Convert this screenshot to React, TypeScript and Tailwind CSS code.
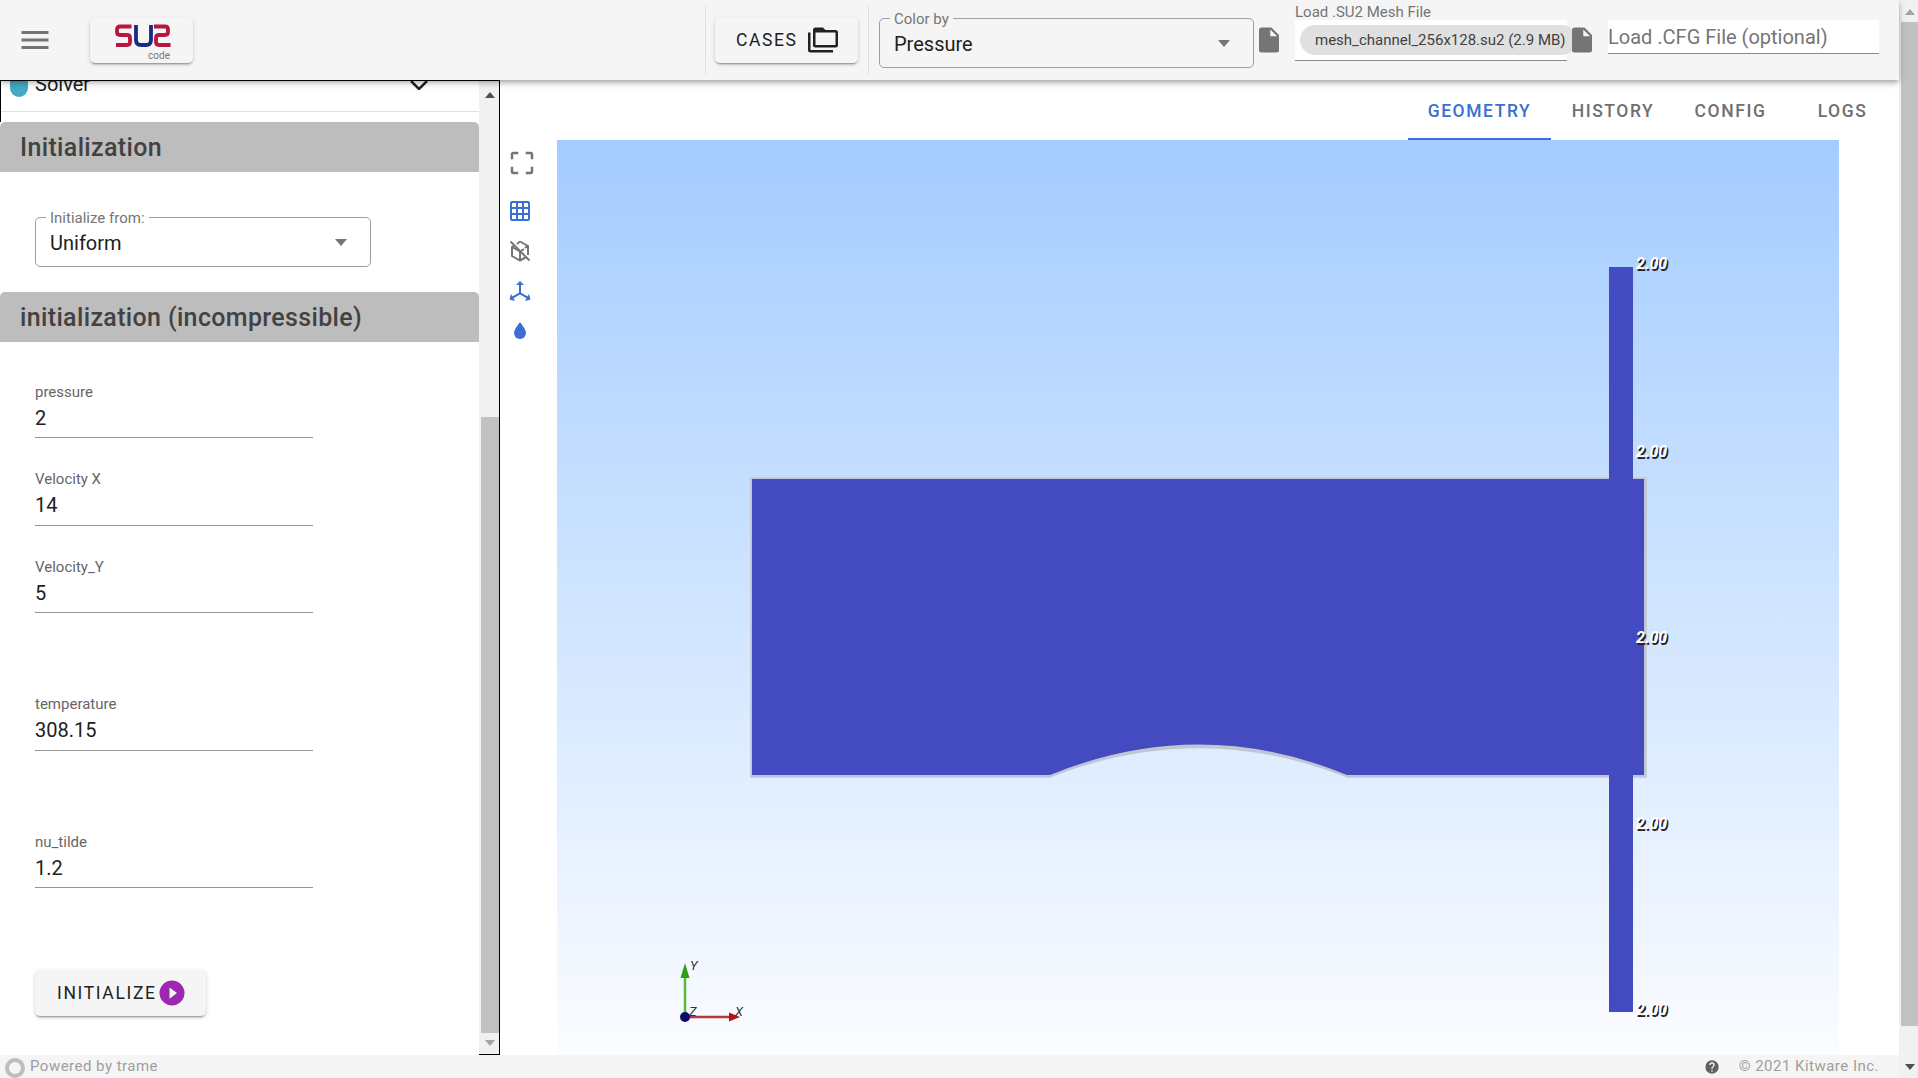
import React from 'react';

const paths = {
  menu: 'M3,6H21V8H3V6M3,11H21V13H3V11M3,16H21V18H3V16Z',
  file: 'M13,9V3.5L18.5,9M6,2C4.89,2 4,2.89 4,4V20A2,2 0 0,0 6,22H18A2,2 0 0,0 20,20V8L14,2H6Z',
  folders: 'M22,4H14L12,2H6A2,2 0 0,0 4,4V16A2,2 0 0,0 6,18H22A2,2 0 0,0 24,16V6A2,2 0 0,0 22,4M2,6H0V20A2,2 0 0,0 2,22H20V20H2V6M6,6H22V16H6V6Z',
  crop: 'M19,3H15V5H19V9H21V5C21,3.89 20.1,3 19,3M19,19H15V21H19C20.1,21 21,20.1 21,19V15H19M5,15H3V19A2,2 0 0,0 5,21H9V19H5M3,5V9H5V5H9V3H5A2,2 0 0,0 3,5Z',
  grid: 'M10,4V8H14V4H10M16,4V8H20V4H16M16,10V14H20V10H16M16,16V20H20V16H16M14,20V16H10V20H14M8,20V16H4V20H8M8,14V10H4V14H8M8,8V4H4V8H8M10,14H14V10H10V14M4,2H20A2,2 0 0,1 22,4V20A2,2 0 0,1 20,22H4C2.92,22 2,21.1 2,20V4A2,2 0 0,1 4,2Z',
  axis: 'M12,2L16,6H13V13.85L19.53,17.61L21,15.03L22.5,20.5L17,21.96L18.53,19.35L12,15.58L5.47,19.35L7,21.96L1.5,20.5L3,15.03L4.47,17.61L11,13.85V6H8L12,2Z',
  water: 'M12,20A6,6 0 0,1 6,14C6,10 12,3.25 12,3.25C12,3.25 18,10 18,14A6,6 0 0,1 12,20Z',
  play: 'M10,16.5V7.5L16,12M12,2A10,10 0 0,0 2,12A10,10 0 0,0 12,22A10,10 0 0,0 22,12A10,10 0 0,0 12,2Z',
  help: 'M15.07,11.25L14.17,12.17C13.45,12.89 13,13.5 13,15H11V14.5C11,13.39 11.45,12.39 12.17,11.67L13.41,10.41C13.78,10.05 14,9.55 14,9C14,7.89 13.1,7 12,7A2,2 0 0,0 10,9H8A4,4 0 0,1 12,5A4,4 0 0,1 16,9C16,9.88 15.64,10.67 15.07,11.25M13,19H11V17H13M12,2A10,10 0 0,0 2,12A10,10 0 0,0 12,22A10,10 0 0,0 22,12C22,6.47 17.5,2 12,2Z',
};

const Icon: React.FC<{ d: string; className?: string }> = ({ d, className }) => (
  <svg viewBox="0 0 24 24" fill="currentColor" className={className}>
    <path d={d} />
  </svg>
);

const Caret: React.FC<{ className?: string }> = ({ className }) => (
  <svg viewBox="0 0 12 7" className={className}>
    <path d="M0 0H12L6 7Z" fill="#757575" />
  </svg>
);

const btnShadow = 'shadow-[0_3px_1px_-2px_rgba(0,0,0,0.2),0_2px_2px_0_rgba(0,0,0,0.14),0_1px_5px_0_rgba(0,0,0,0.12)]';

const OutlinedSelect: React.FC<{ label: string; value: string; className: string; notch: string; caret: string }> = ({ label, value, className, notch, caret }) => (
  <div className={`relative h-[50px] rounded-[5px] border border-[#9e9e9e] flex items-center pl-[14px] pt-[1px] ${className}`}>
    <span className={`absolute -top-[9px] left-[10px] px-[4px] text-[15px] leading-[18px] text-[#757575] ${notch}`}>{label}</span>
    <span className="text-[20px] text-[#212121]">{value}</span>
    <Caret className={`absolute top-[21px] w-[12px] h-[7px] ${caret}`} />
  </div>
);

const fields = [
  { label: 'pressure', value: '2', mt: 'mt-[39px]', pt: 'pt-[1px]', h: 'h-[35px]' },
  { label: 'Velocity X', value: '14', mt: 'mt-[31px]', pt: '', h: 'h-[36px]' },
  { label: 'Velocity_Y', value: '5', mt: 'mt-[30px]', pt: 'pt-[1px]', h: 'h-[35px]' },
  { label: 'temperature', value: '308.15', mt: 'mt-[81px]', pt: '', h: 'h-[36px]' },
  { label: 'nu_tilde', value: '1.2', mt: 'mt-[80px]', pt: 'pt-[1px]', h: 'h-[35px]' },
];

const Header = () => (
  <header className="relative z-10 h-[80px] flex-none flex items-center bg-[#f5f5f5] shadow-[0_2px_4px_-1px_rgba(0,0,0,0.2),0_4px_5px_0_rgba(0,0,0,0.14),0_1px_10px_0_rgba(0,0,0,0.12)]">
    <Icon d={paths.menu} className="ml-[17px] w-[36px] h-[36px] text-[#757575]" />
    <div className={`ml-[37px] w-[103px] h-[45px] rounded-[5px] bg-[#f5f5f5] flex flex-col items-start pl-[25px] pt-[6px] ${btnShadow}`}>
      <svg viewBox="0 0 57 24" className="w-[57px] h-[24px]" fill="none" strokeWidth="3.8">
        <path d="M16.5 2.5H5Q2 2.5 2 5.5V8Q2 11 5 11H12Q15 11 15 14V18Q15 21 12 21H1" stroke="#b8163f" />
        <path d="M21 1V16Q21 21 26 21H31Q36 21 36 16V1" stroke="#1b2b85" />
        <path d="M39 2.5H50Q53 2.5 53 5.5V8Q53 11 50 11H44Q41 11 41 14V18Q41 21 44 21H55.5" stroke="#b8163f" />
      </svg>
      <span className="self-end mr-[23px] mt-[3px] text-[10px] leading-[10px] text-[#757575]">code</span>
    </div>
    <div className="ml-[512px] w-px h-[70px] bg-[#e0e0e0]" />
    <div className={`ml-[9px] w-[143px] h-[45px] rounded-[5px] bg-[#f5f5f5] flex items-center pl-[21px] ${btnShadow}`}>
      <span className="text-[17.5px] tracking-[1.6px] text-[#212121]">CASES</span>
      <Icon d={paths.folders} className="ml-[10px] w-[30px] h-[30px] text-[#212121]" />
    </div>
    <div className="ml-[10px] w-px h-[70px] bg-[#e0e0e0]" />
    <OutlinedSelect label="Color by" value="Pressure" className="ml-[10px] mt-[6px] w-[375px]" notch="bg-[#f5f5f5]" caret="left-[338px]" />
    <Icon d={paths.file} className="w-[30px] h-[30px] text-[#757575]" />
    <div className="ml-[11px] w-[272px] self-start flex flex-col">
      <span className="h-[20px] text-[15px] leading-[24px] text-[#757575]">Load .SU2 Mesh File</span>
      <div className="h-[41px] bg-white border-b border-[#8a8a8a] pt-[5px] pl-[5px]">
        <div className="w-[277px] h-[30px] rounded-full bg-[#e0e0e0] flex items-center pl-[15px] text-[15px] text-[#424242] whitespace-nowrap">mesh_channel_256x128.su2 (2.9 MB)</div>
      </div>
    </div>
    <Icon d={paths.file} className="relative w-[30px] h-[30px] text-[#757575]" />
    <div className="ml-[11px] mt-[20px] w-[271px] h-[34px] self-start bg-white border-b border-[#8a8a8a]">
      <span className="block pt-[1px] text-[20px] leading-[32px] text-[#757575]">Load .CFG File (optional)</span>
    </div>
  </header>
);

const Sidebar = () => (
  <aside className="w-[500px] flex-none flex border-t border-r border-black overflow-hidden">
    <div className="w-[479px] flex-none bg-white flex flex-col">
      <div className="h-[41px] flex-none border-l border-black">
        <div className="h-[31px] border-b border-[#e0e0e0] overflow-hidden flex items-start">
          <div className="-mt-[9px] flex items-center w-full pl-[9px]">
            <span className="w-[18px] h-[25px] rounded-full bg-[#45a9c6]" />
            <span className="ml-[7px] text-[20px] leading-[25px] text-[#212121]">Solver</span>
            <svg viewBox="0 0 18 10" className="ml-[320px] w-[18px] h-[10px]" fill="none" stroke="#212121" strokeWidth="2.5"><path d="M1 1L9 9L17 1" /></svg>
          </div>
        </div>
      </div>
      <div className="h-[50px] flex-none rounded-t-[5px] bg-[#bdbdbd] flex items-center pl-[20px] pt-[1px] text-[25px] tracking-[0.35px] font-medium text-[#424242]">Initialization</div>
      <div className="h-[120px] flex-none pt-[45px] pl-[35px]">
        <OutlinedSelect label="Initialize from:" value="Uniform" className="w-[336px]" notch="bg-white" caret="left-[299px]" />
      </div>
      <div className="h-[50px] flex-none rounded-t-[5px] bg-[#bdbdbd] flex items-center pl-[20px] pt-[1px] text-[25px] tracking-[0.35px] font-medium text-[#424242]">initialization (incompressible)</div>
      <div className="pl-[35px]">
        {fields.map(f => (
          <div key={f.label} className={`w-[278px] border-b border-[#949494] ${f.mt} ${f.pt}`}>
            <div className="h-[20px] text-[15px] leading-[20px] text-[#666666]">{f.label}</div>
            <div className={`text-[20px] leading-[32px] text-[#212121] ${f.h}`}>{f.value}</div>
          </div>
        ))}
        <div className={`mt-[82px] w-[171px] h-[46px] rounded-[5px] bg-[#f5f5f5] flex items-center pl-[22px] ${btnShadow}`}>
          <span className="text-[17.5px] tracking-[1.65px] text-[#212121]">INITIALIZE</span>
          <Icon d={paths.play} className="w-[30px] h-[30px] text-[#9c27b0]" />
        </div>
      </div>
    </div>
    <div className="flex-1 flex flex-col bg-[#f1f1f1] border-b border-black pl-[2px]">
      <div className="h-[336px] flex-none pt-[11px] flex justify-center">
        <svg viewBox="0 0 10 6" className="w-[10px] h-[6px]"><path d="M5 0L10 6H0Z" fill="#505050" /></svg>
      </div>
      <div className="h-[616px] flex-none bg-[#c1c1c1]" />
      <div className="flex-1 flex justify-center pt-[7px]">
        <svg viewBox="0 0 10 6" className="w-[10px] h-[6px]"><path d="M0 0H10L5 6Z" fill="#a3a3a3" /></svg>
      </div>
    </div>
  </aside>
);

const tabs = [
  { name: 'GEOMETRY', width: 'w-[143px]', cls: 'text-[#3b6fd1] border-[#3b6fd1]' },
  { name: 'HISTORY', width: 'w-[122px]', cls: 'pl-[2px] text-[#6f6f6f] border-transparent' },
  { name: 'CONFIG', width: 'w-[113px]', cls: 'pl-[2px] text-[#6f6f6f] border-transparent' },
  { name: 'LOGS', width: 'w-[113px]', cls: 'text-[#6f6f6f] border-transparent' },
];

const scalarLabels = [129, 317, 503, 689, 875];

const MeshView = () => (
  <svg viewBox="0 0 1282 915" className="w-[1282px] h-[915px]">
    <path
      d="M194 338H1089V637H791Q642 578 492 637H194Z"
      fill="#c2c6d2"
      stroke="#c2c6d2"
      strokeWidth="1.5"
    />
    <path d="M195 339H1087V635H790Q642 574 493 635H195Z" fill="#444bc1" />
    <rect x="1052" y="127" width="24" height="745" fill="#444bc1" />
    {scalarLabels.map(y => (
      <g key={y} fontFamily="Roboto, sans-serif" fontSize="16" fontStyle="italic" fontWeight="700">
        <text x="1080.5" y={y + 1.5} fill="#222222">2.00</text>
        <text x="1079" y={y} fill="#ffffff">2.00</text>
      </g>
    ))}
    <g>
      <line x1="128" y1="877" x2="128" y2="836" stroke="#5cb83c" strokeWidth="2.5" />
      <path d="M128 823L132.5 838H123.5Z" fill="#2f9e12" />
      <line x1="128" y1="877" x2="175" y2="877" stroke="#b03a3a" strokeWidth="2.5" />
      <path d="M183 877L172 872.5V881.5Z" fill="#b01818" />
      <circle cx="128" cy="877" r="5" fill="#0a0a6e" />
      <g fontFamily="Roboto, sans-serif" fontSize="13" fontStyle="italic" fill="#333333">
        <text x="133" y="830">Y</text>
        <text x="132" y="876">Z</text>
        <text x="178" y="876">X</text>
      </g>
    </g>
  </svg>
);

const Viewer = () => (
  <main className="flex-1 flex flex-col min-w-0 bg-white">
    <nav className="h-[60px] flex-none flex justify-end">
      {tabs.map(t => (
        <div key={t.name} className={`h-full flex items-center justify-center border-b-2 pt-[4px] text-[17.5px] tracking-[1.56px] font-medium ${t.width} ${t.cls}`}>{t.name}</div>
      ))}
    </nav>
    <div className="flex-1 flex min-h-0">
      <div className="w-[57px] flex-none flex flex-col pt-[8px]">
        <Icon d={paths.crop} className="ml-[7px] w-[30px] h-[30px] text-[#757575]" />
        <Icon d={paths.grid} className="ml-[8px] mt-[21px] w-[24px] h-[24px] text-[#3b6fd1]" />
        <svg viewBox="0 0 24 24" className="ml-[8px] mt-[16px] w-[24px] h-[24px]" fill="none" stroke="#757575" strokeWidth="2">
          <path d="M12 2.5L20 7V16M17.5 18.5L12 21.5L4 17V8L6 6.8M9 5L12 2.5" />
          <path d="M4 8L12 12.5V21.5M12 12.5L16 10.2M20 7L17 8.8" />
          <path d="M2.5 2.5L21.5 21.5" />
        </svg>
        <Icon d={paths.axis} className="ml-[8px] mt-[16px] w-[24px] h-[24px] text-[#3b6fd1]" />
        <Icon d={paths.water} className="ml-[8px] mt-[16px] w-[24px] h-[24px] text-[#3b6fd1]" />
      </div>
      <div className="w-[1282px] h-[915px] flex-none bg-gradient-to-b from-[#a4ccff] to-[#fbfcff]">
        <MeshView />
      </div>
    </div>
  </main>
);

const Footer = () => (
  <footer className="h-[23px] flex-none bg-[#f5f5f5] flex items-center text-[15px] tracking-[0.48px] text-[#9e9e9e]">
    <span className="ml-[5px] mt-[3px] w-[20px] h-[20px] rounded-full border-[4px] border-[#bdbdbd]" />
    <span className="ml-[5px]">Powered by trame</span>
    <Icon d={paths.help} className="ml-auto w-[16px] h-[16px] text-[#616161]" />
    <span className="ml-[19px] mr-[20px]">© 2021 Kitware Inc.</span>
  </footer>
);

const App: React.FC = () => (
  <div className="w-full h-[1078px] overflow-hidden flex bg-white" style={{ fontFamily: 'Roboto, "Liberation Sans", sans-serif' }}>
    <div className="w-[1899px] flex-none flex flex-col">
      <Header />
      <div className="flex-1 flex min-h-0">
        <Sidebar />
        <Viewer />
      </div>
      <Footer />
    </div>
    <div className="flex-1 flex flex-col bg-[#f1f1f1] pl-[2px]">
      <div className="h-[22px] flex-none flex justify-center pt-[9px]">
        <svg viewBox="0 0 10 6" className="w-[10px] h-[6px]"><path d="M5 0L10 6H0Z" fill="#a3a3a3" /></svg>
      </div>
      <div className="h-[1004px] flex-none bg-[#c1c1c1]" />
      <div className="flex-1 flex justify-center items-end pb-[8px]">
        <svg viewBox="0 0 10 6" className="w-[10px] h-[6px]"><path d="M0 0H10L5 6Z" fill="#505050" /></svg>
      </div>
    </div>
  </div>
);

export default App;
